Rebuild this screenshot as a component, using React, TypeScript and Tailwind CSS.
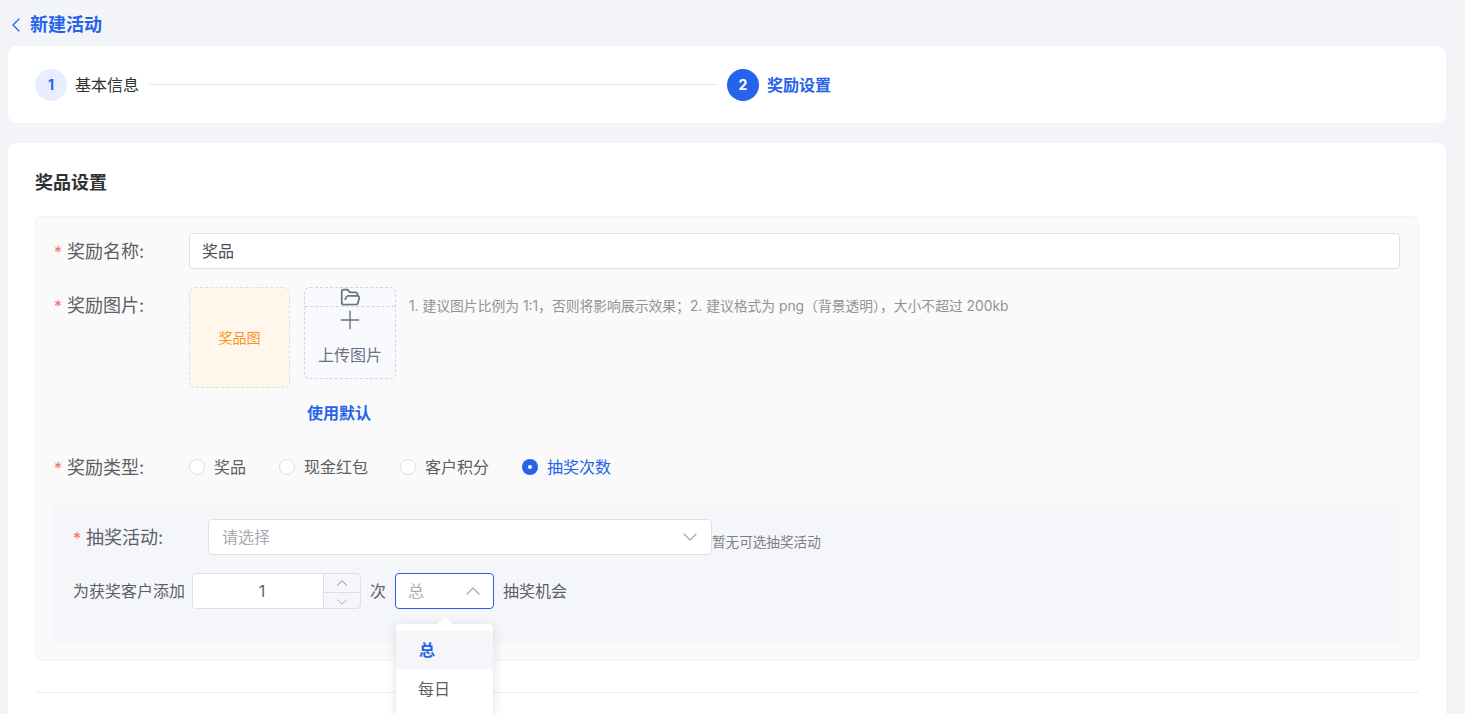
import { ChevronDown, ChevronLeft, ChevronUp, FolderOpen, Plus } from 'lucide-react'

const font = 'font-["Inter","Noto_Sans_CJK_SC",sans-serif]'

function FormLabel({ text }: { text: string }) {
  return (
    <div className="flex items-center h-9 pt-[2px] text-lg text-[#5c5f66] leading-9">
      <span className="text-[#f56c6c] text-base w-[13px]">*</span>
      <span>{text}</span>
    </div>
  )
}

function RadioItem({ label, checked, className }: { label: string; checked?: boolean; className?: string }) {
  return (
    <div className={`flex items-center gap-[9px] ${className ?? ''}`}>
      {checked ? (
        <span className="w-4 h-4 rounded-full bg-[#2563eb] flex items-center justify-center">
          <span className="w-1 h-1 rounded-full bg-white" />
        </span>
      ) : (
        <span className="w-4 h-4 rounded-full bg-white border border-[#dcdfe6]" />
      )}
      <span className={`text-base ${checked ? 'text-[#2563eb]' : 'text-[#5c5f66]'}`}>{label}</span>
    </div>
  )
}

export default function App() {
  return (
    <div className={`h-screen overflow-hidden bg-[#f3f4f8] px-2 ${font}`}>
      <div className="h-[46px] flex items-center pt-[4px] -ml-[4px] gap-[2px]">
        <ChevronLeft className="w-6 h-6 text-[#2563eb]" strokeWidth={1.25} />
        <strong className="text-lg font-semibold text-[#2563eb]">新建活动</strong>
      </div>

      <div className="w-[1438px] h-[77px] pt-px bg-white rounded-lg border border-white flex items-center pl-[26px]">
        <div className="w-8 h-8 rounded-full bg-[#e8eeff] text-[#2563eb] text-sm font-bold flex items-center justify-center">
          1
        </div>
        <span className="ml-2 text-base text-[#303133]">基本信息</span>
        <div className="ml-[9px] mb-[2px] w-[570px] h-px bg-[#e8eaf2]" />
        <div className="ml-[9px] w-8 h-8 rounded-full bg-[#2563eb] text-white text-sm font-bold flex items-center justify-center">
          2
        </div>
        <span className="ml-2 text-base font-semibold text-[#2563eb]">奖励设置</span>
      </div>

      <div className="mt-[20px] w-[1438px] h-[700px] bg-white rounded-lg border border-white px-[26px] pt-[26px]">
        <h2 className="text-lg font-semibold text-[#303133] leading-[26px]">奖品设置</h2>

        <div className="mt-[20px] h-[445px] bg-[#fafafb] rounded-md border border-[#f2f3f6] px-[18px] pt-4">
          <div className="flex">
            <div className="w-[135px]">
              <FormLabel text="奖励名称:" />
            </div>
            <div className="flex-1 h-9 bg-white border border-[#dcdfe6] rounded px-3 flex items-center text-base text-[#4a4d55]">
              奖品
            </div>
          </div>

          <div className="flex mt-[18px]">
            <div className="w-[135px]">
              <FormLabel text="奖励图片:" />
            </div>
            <div className="flex flex-col">
              <div className="flex">
                <div className="w-[101px] h-[101px] rounded-md border border-dashed border-[#dcdfe6] bg-[#fff6ec] flex items-center justify-center text-sm text-[#f7941d]">
                  奖品图
                </div>
                <div className="ml-[14px] w-[92px] h-[92px] rounded-md border border-dashed border-[#d3d6de] bg-[#f9fafd] flex flex-col items-center">
                  <div className="w-full h-[19px] border-b border-dashed border-[#d3d6de] flex items-center justify-center">
                    <FolderOpen className="w-[21px] h-[21px] text-[#6b7280]" strokeWidth={2} />
                  </div>
                  <Plus className="-mt-[2px] -mb-[5px] w-[30px] h-[30px] text-[#6b7280]" strokeWidth={1.1} />
                  <span className="mt-[13px] text-base text-[#6b7280]">上传图片</span>
                </div>
                <p className="ml-[13px] mt-[9px] text-[13.8px] leading-5 text-[#909399]">
                  1. 建议图片比例为 1:1，否则将影响展示效果；2. 建议格式为 png（背景透明），大小不超过 200kb
                </p>
              </div>
              <span className="ml-[118px] mt-[15px] text-base font-semibold leading-5 text-[#2563eb]">使用默认</span>
            </div>
          </div>

          <div className="flex items-center mt-[26px]">
            <div className="w-[135px]">
              <FormLabel text="奖励类型:" />
            </div>
            <RadioItem label="奖品" className="w-[90px]" />
            <RadioItem label="现金红包" className="w-[121px]" />
            <RadioItem label="客户积分" className="w-[122px]" />
            <RadioItem label="抽奖次数" checked />
          </div>

          <div className="mt-[18px] -ml-px h-[140px] bg-[#f5f6fa] rounded-md pl-5 pt-4">
            <div className="flex items-center">
              <div className="w-[135px]">
                <FormLabel text="抽奖活动:" />
              </div>
              <div className="w-[504px] h-9 bg-white border border-[#dcdfe6] rounded flex items-center justify-between pl-[13px] pr-[9px] text-base text-[#a8abb2]">
                请选择
                <ChevronDown className="w-6 h-6 text-[#a8abb2]" strokeWidth={1.25} />
              </div>
              <span className="mt-[10px] text-[13.6px] text-[#7c7f86]">暂无可选抽奖活动</span>
            </div>

            <div className="flex items-center mt-[18px] text-base text-[#5c5f66]">
              <span className="w-[119px]">为获奖客户添加</span>
              <div className="w-[169px] h-9 border border-[#dcdfe6] rounded flex overflow-hidden">
                <div className="flex-1 bg-white flex items-center justify-center pl-2 text-base text-[#5c5f66]">1</div>
                <div className="w-[37px] border-l border-[#dcdfe6] flex flex-col">
                  <div className="flex-1 flex items-center justify-center border-b border-[#dcdfe6]">
                    <ChevronUp className="w-[18px] h-[18px] text-[#7c7f86]" strokeWidth={1.25} />
                  </div>
                  <div className="flex-1 flex items-center justify-center">
                    <ChevronDown className="w-[18px] h-[18px] text-[#a8abb2]" strokeWidth={1.25} />
                  </div>
                </div>
              </div>
              <span className="ml-[9px]">次</span>
              <div className="relative ml-[9px]">
                <div className="w-[99px] h-9 bg-white border border-[#2563eb] rounded flex items-center justify-between pl-[12px] pr-[8px] text-base text-[#a8abb2]">
                  总
                  <ChevronUp className="w-6 h-6 text-[#a8abb2]" strokeWidth={1.25} />
                </div>
                {/* dropdown */}
                <div className="absolute left-px top-[51px] w-[97px] z-10 bg-white rounded shadow-[0_2px_12px_rgba(0,0,0,0.12)] py-[7px]">
                  <div className="absolute -top-[7px] left-[41px] w-0 h-0 border-x-[8px] border-x-transparent border-b-[7px] border-b-white" />
                  <div className="h-[38px] bg-[#f5f6fa] flex items-center pl-[23px] text-base font-bold text-[#2563eb]">总</div>
                  <div className="h-[39px] flex items-center pl-[22px] text-base text-[#5c5f66]">每日</div>
                </div>
              </div>
              <span className="ml-[9px]">抽奖机会</span>
            </div>
          </div>
        </div>

        <div className="mt-[31px] h-px bg-[#eceef3]" />
      </div>
    </div>
  )
}
